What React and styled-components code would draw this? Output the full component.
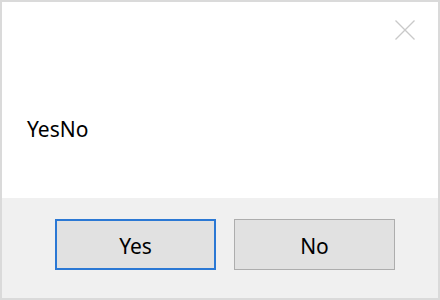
import React from "react";
import styled, { createGlobalStyle } from "styled-components";

const Global = createGlobalStyle`
  html, body { margin: 0; padding: 0; background: #ffffff; }
  #root { width: 440px; height: 300px; }
`;

const Window = styled.div`
  box-sizing: border-box;
  width: 440px;
  height: 300px;
  border: 2px solid #dadada;
  display: flex;
  flex-direction: column;
  font-family: "Segoe UI", "Noto Sans", "Open Sans", sans-serif;
  color: #000;
`;

const Body = styled.div`
  flex: 0 0 196px;
  background: #ffffff;
  display: flex;
  flex-direction: column;
  position: relative;
`;

const CloseButton = styled.div`
  position: absolute;
  top: 18px;
  right: 23px;
  width: 20px;
  height: 20px;
  display: flex;
`;

const Message = styled.div`
  padding: 112px 0 0 25px;
  font-size: 21px;
  line-height: 30px;
`;

const Footer = styled.div`
  flex: 1;
  background: #f0f0f0;
  display: flex;
  align-items: flex-start;
  padding: 21px 0 0 53px;
  gap: 18px;
`;

const Button = styled.button`
  box-sizing: border-box;
  width: 161px;
  height: 51px;
  margin: 0;
  background: #e1e1e1;
  border: ${(p) => (p.$default ? "2px solid #2b78d4" : "1px solid #adadad")};
  font-family: inherit;
  font-size: 21px;
  color: #000;
  padding: 2px 0 0 0;
  display: flex;
  align-items: center;
  justify-content: center;
`;

export default function App() {
  return (
    <>
      <Global />
      <Window>
        <Body>
          <CloseButton>
            <svg width="20" height="20" viewBox="0 0 20 20">
              <path d="M0.5 0.5 L19.5 19.5 M19.5 0.5 L0.5 19.5" stroke="#c9c9c9" strokeWidth="1.3" fill="none" />
            </svg>
          </CloseButton>
          <Message>YesNo</Message>
        </Body>
        <Footer>
          <Button $default>Yes</Button>
          <Button>No</Button>
        </Footer>
      </Window>
    </>
  );
}
